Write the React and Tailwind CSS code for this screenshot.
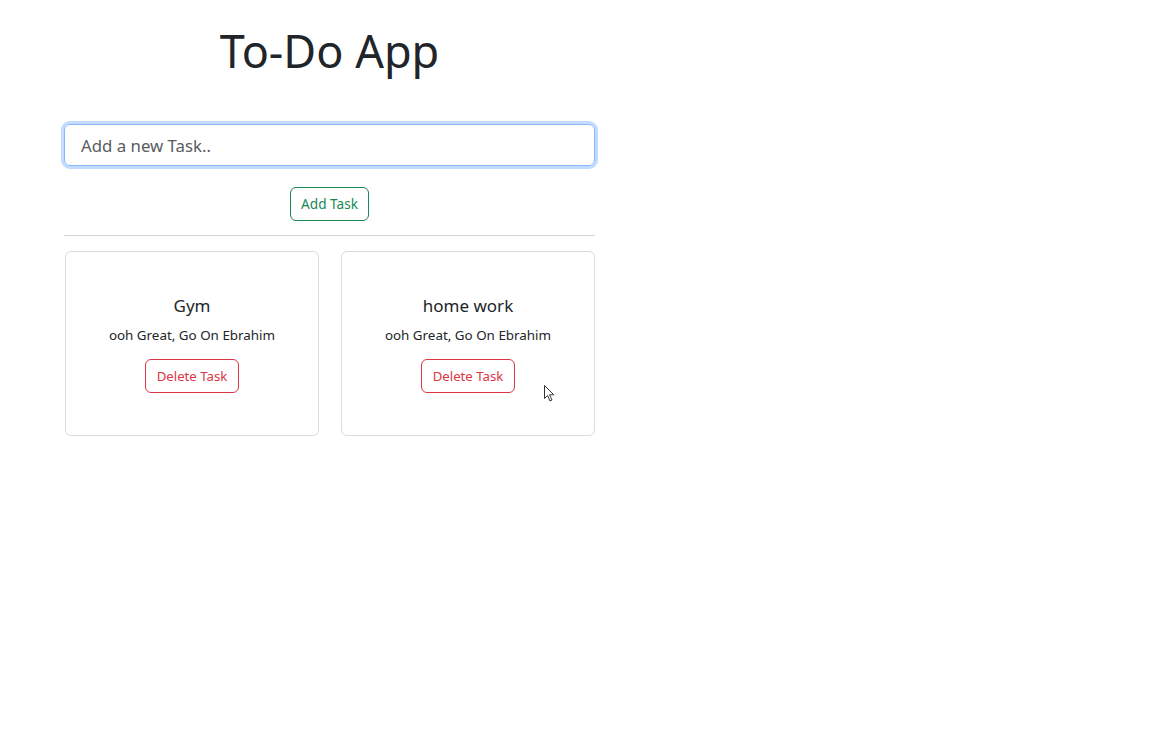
import React from "react";

function Card({ title }) {
  return (
    <div className="w-[254px] h-[185px] border border-[#dcdcdc] rounded-[6px] flex flex-col items-center justify-center">
      <h5 className="text-[17px] leading-[24px] text-[#212529] mb-[5px]">{title}</h5>
      <p className="text-[13.4px] leading-[24px] text-[#212529] mb-[12px]">ooh Great, Go On Ebrahim</p>
      <button className="h-[34px] px-[11px] border border-[#dc3545] text-[#dc3545] rounded-[6px] text-[13.2px] leading-[20px] bg-white">
        Delete Task
      </button>
    </div>
  );
}

export default function App() {
  return (
    <div className="relative min-h-[742px] bg-white font-['Noto_Sans',sans-serif]">
      <div className="w-[531px] ml-[64px]">
        <h1 className="pt-[24px] text-center text-[45px] leading-[54px] text-[#212529] font-normal">To-Do App</h1>
        <div className="mt-[46px]">
          <input
            type="text"
            placeholder="Add a new Task.."
            className="w-full h-[42px] border border-[#86b7fe] rounded-[6px] shadow-[0_0_0_3px_rgba(13,110,253,0.25)] px-[16px] text-[16.8px] text-[#212529] placeholder:text-[#595c5f] outline-none"
          />
        </div>
        <div className="flex justify-center mt-[21px]">
          <button className="h-[34px] px-[10px] border border-[#198754] text-[#198754] rounded-[6px] text-[13.6px] leading-[20px] bg-white">
            Add Task
          </button>
        </div>
        <hr className="mt-[14px] border-0 border-t border-[#d4d4d4]" />
        <div className="flex gap-[22px] mt-[15px] pl-[1px]">
          <Card title="Gym" />
          <Card title="home work" />
        </div>
      </div>
      <svg className="absolute left-[544px] top-[385px]" width="12" height="18" viewBox="0 0 12 18">
        <path d="M0.5 0.5 L0.5 13.5 L3.5 10.5 L6 16 L8 15 L5.5 9.8 L9.8 9.8 Z" fill="#fff" stroke="#333" strokeWidth="1" strokeLinejoin="round" />
      </svg>
    </div>
  );
}
